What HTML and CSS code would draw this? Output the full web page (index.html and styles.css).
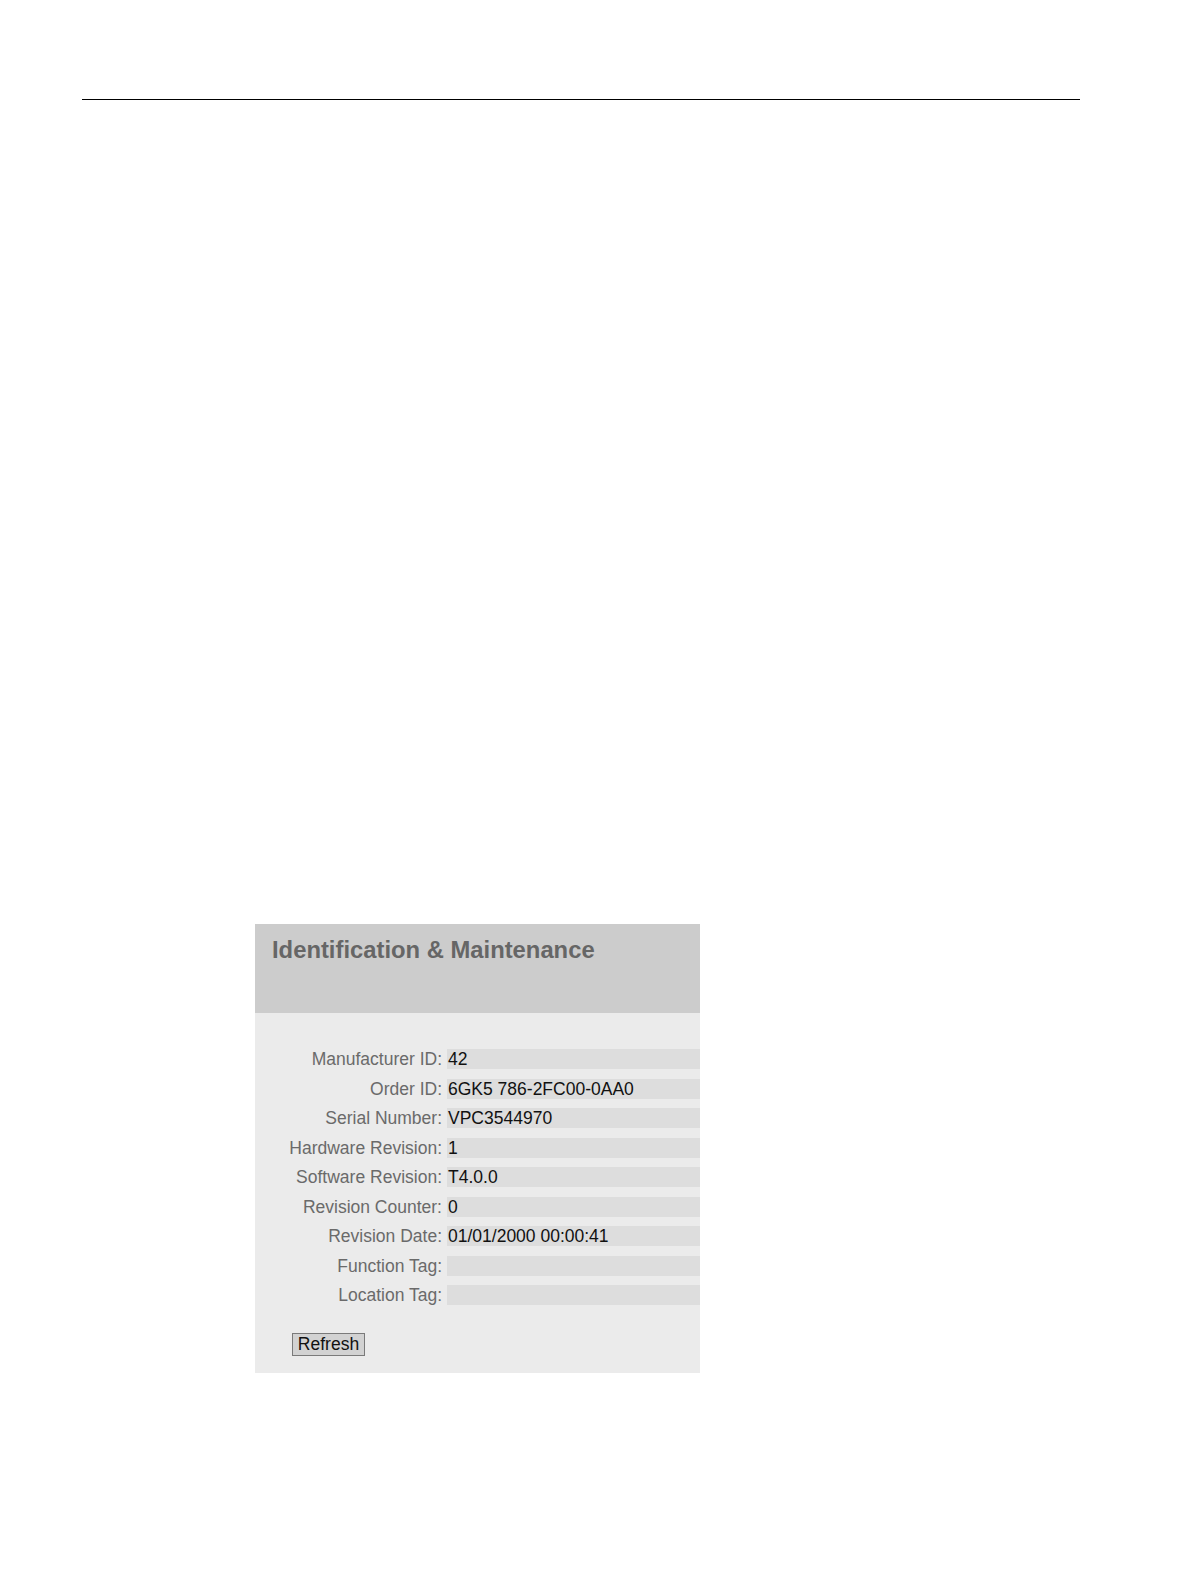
FILE: index.html
```html
<!DOCTYPE html>
<html lang="en">
<head>
<meta charset="utf-8">
<title>Identification &amp; Maintenance</title>
<link rel="stylesheet" href="styles.css">
</head>
<body>
<div class="page">
  <div class="rule"></div>
  <div class="panel">
    <div class="panel-head">
      <h1 class="title">Identification &amp; Maintenance</h1>
    </div>
    <div class="panel-body">
      <div class="fields">
        <div class="label">Manufacturer ID:</div><div class="value">42</div>
        <div class="label">Order ID:</div><div class="value">6GK5 786-2FC00-0AA0</div>
        <div class="label">Serial Number:</div><div class="value">VPC3544970</div>
        <div class="label">Hardware Revision:</div><div class="value">1</div>
        <div class="label">Software Revision:</div><div class="value">T4.0.0</div>
        <div class="label">Revision Counter:</div><div class="value">0</div>
        <div class="label">Revision Date:</div><div class="value">01/01/2000 00:00:41</div>
        <div class="label">Function Tag:</div><div class="value"></div>
        <div class="label">Location Tag:</div><div class="value"></div>
      </div>
      <button class="btn" type="button">Refresh</button>
    </div>
  </div>
</div>
</body>
</html>
```

FILE: styles.css
```css
html, body {
  margin: 0;
  padding: 0;
  background: #ffffff;
}

.page {
  width: 1191px;
  min-height: 1587px;
  padding-top: 99px;
  box-sizing: border-box;
  font-family: "Liberation Sans", Arial, sans-serif;
}

.rule {
  margin-left: 82px;
  width: 998px;
  height: 1px;
  background: #000000;
}

.panel {
  margin-top: 824px;
  margin-left: 255px;
  width: 445px;
  background: #ebebeb;
}

.panel-head {
  height: 89px;
  background: #cccccc;
  padding: 12px 0 0 17px;
  box-sizing: border-box;
}

.title {
  margin: 0;
  font-size: 23.8px;
  font-weight: bold;
  color: #666666;
  line-height: 28px;
}

.panel-body {
  padding: 36px 0 17px 0;
}

.fields {
  display: grid;
  grid-template-columns: 187px 1fr;
  column-gap: 5px;
  row-gap: 9.5px;
  font-size: 17.5px;
}

.label {
  text-align: right;
  color: #6a6a6a;
  height: 20px;
  line-height: 20px;
  white-space: nowrap;
}

.value {
  background: #dddddd;
  height: 20px;
  line-height: 20px;
  color: #111111;
  padding-left: 1px;
  white-space: nowrap;
}

.btn {
  display: block;
  margin: 28px 0 0 37px;
  width: 73px;
  height: 23px;
  padding: 0;
  font-family: "Liberation Sans", Arial, sans-serif;
  font-size: 17.5px;
  line-height: 21px;
  color: #111111;
  background: #d2d2d2;
  border: 1px solid #7a7a7a;
  border-radius: 0;
}
```
